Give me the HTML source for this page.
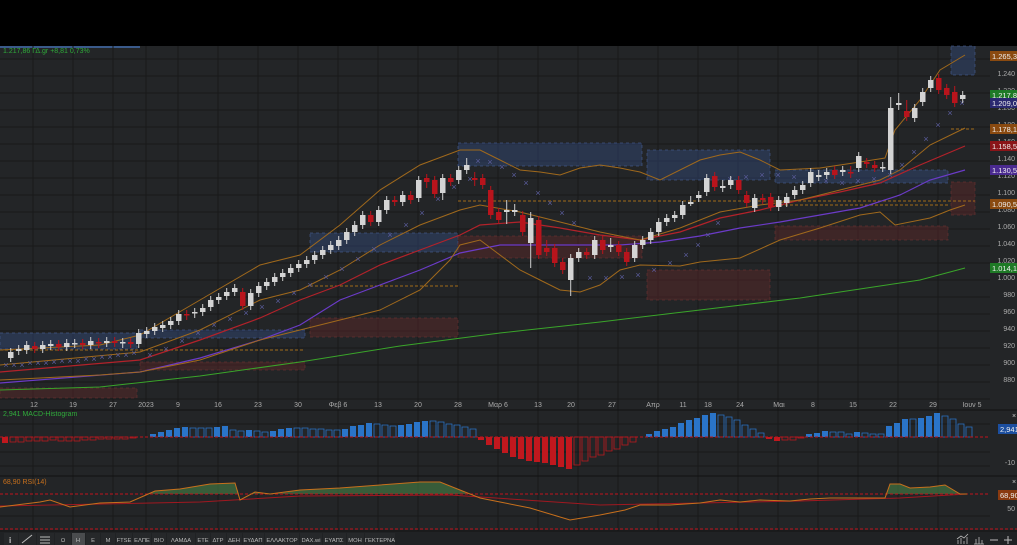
<!DOCTYPE html>
<html><head><meta charset="utf-8">
<style>
html,body{margin:0;padding:0;background:#000;}
body{width:1017px;height:545px;overflow:hidden;position:relative;font-family:"Liberation Sans",sans-serif;}
svg{position:absolute;left:0;top:0;}
</style></head>
<body>
<svg width="1017" height="545" xmlns="http://www.w3.org/2000/svg" font-family="Liberation Sans, sans-serif">
<rect x="0" y="0" width="1017" height="46" fill="#000"/>
<rect x="0" y="46" width="1017" height="499" fill="#232527"/>
<rect x="0" y="46" width="140" height="2" fill="#3a5a8a"/>
<g stroke="#18191a" stroke-width="1">
<path d="M33 46V531M73 46V531M113 46V531M146 46V531M178 46V531M218 46V531M258 46V531M298 46V531M338 46V531M378 46V531M418 46V531M458 46V531M498 46V531M538 46V531M578 46V531M618 46V531M658 46V531M698 46V531M738 46V531M778 46V531M818 46V531M858 46V531M898 46V531M938 46V531"/>
<path d="M0 59H990M0 76H990M0 93H990M0 110H990M0 127H990M0 144H990M0 161H990M0 178H990M0 195H990M0 212H990M0 229H990M0 246H990M0 263H990M0 280H990M0 297H990M0 314H990M0 331H990M0 348H990M0 365H990M0 382H990M0 399H990M0 424H990M0 452H990M0 466H990M0 516H990"/>
</g>
<path d="M0 410H1017M0 476H1017M0 531H1017" stroke="#111"/>
<g stroke-dasharray="3,3">
<g fill="rgba(50,75,125,0.45)" stroke="rgba(70,95,150,0.6)">
<rect x="0" y="333" width="137" height="16"/><rect x="140" y="330" width="165" height="8"/><rect x="310" y="233" width="148" height="19"/><rect x="458" y="143" width="184" height="23"/><rect x="647" y="150" width="123" height="30"/><rect x="775" y="170" width="173" height="13"/><rect x="951" y="46" width="24" height="29"/>
</g>
<g fill="rgba(95,40,40,0.45)" stroke="rgba(110,50,50,0.6)">
<rect x="0" y="388" width="137" height="10"/><rect x="140" y="362" width="165" height="8"/><rect x="310" y="318" width="148" height="19"/><rect x="458" y="236" width="184" height="22"/><rect x="647" y="270" width="123" height="30"/><rect x="775" y="226" width="173" height="14"/><rect x="951" y="182" width="24" height="33"/>
</g>
</g>
<path d="M0 350H305M310 286H458M458 201H975M775 205H948M951 129H975" stroke="#a06a1a" stroke-dasharray="3,2"/>
<g fill="none">
<polyline stroke="#3aa52a" points="0,390 100,387 200,376 300,362 400,346 500,333 600,322 700,310 800,298 880,286 920,280 965,268"/>
<polyline stroke="#6b3bc8" stroke-width="1.2" points="0,383 140,372 200,358 260,340 300,325 340,300 380,285 420,270 460,253 500,245 540,245 620,245 660,242 700,236 740,228 780,222 820,215 860,208 900,195 930,180 965,170"/>
<polyline stroke="#b3222a" stroke-width="1.2" points="0,372 140,360 200,340 260,318 300,300 340,285 380,265 420,250 460,235 480,225 520,222 560,228 600,235 640,240 680,232 720,218 760,210 800,200 840,192 880,183 920,165 965,146"/>
<g stroke="#a0691c">
<polyline points="0,365 140,352 200,330 260,300 300,290 340,270 380,245 420,225 460,210 480,205 520,212 560,222 600,232 640,240 680,228 720,212 760,205 800,200 840,190 880,180 900,170 930,145 965,128"/>
<polyline points="0,350 100,345 140,335 200,300 260,265 300,255 340,225 380,190 420,165 460,150 480,150 500,160 520,170 540,172 560,175 580,168 600,165 620,168 640,172 660,180 700,160 720,155 740,152 760,160 780,170 820,168 860,162 885,158 895,130 920,100 940,70 965,55"/>
<polyline points="0,380 100,375 140,372 200,360 260,340 300,330 340,320 380,310 420,290 450,260 460,245 480,240 500,255 520,270 540,280 560,290 580,292 600,285 620,270 640,265 680,266 700,262 740,258 780,240 820,228 860,215 880,212 895,225 930,218 950,210 965,205"/>
</g>
</g>
<g fill="#5a5c9a" font-size="9" text-anchor="middle">
<text x="6" y="368">×</text><text x="14" y="368">×</text><text x="22" y="368">×</text><text x="30" y="366">×</text><text x="38" y="366">×</text><text x="46" y="366">×</text><text x="54" y="365">×</text><text x="62" y="364">×</text><text x="70" y="364">×</text><text x="78" y="364">×</text><text x="86" y="362">×</text><text x="94" y="362">×</text><text x="102" y="360">×</text><text x="110" y="360">×</text><text x="118" y="358">×</text><text x="126" y="358">×</text><text x="134" y="356">×</text>
<text x="150" y="358">×</text><text x="166" y="352">×</text><text x="182" y="344">×</text><text x="198" y="336">×</text><text x="214" y="328">×</text><text x="230" y="322">×</text><text x="246" y="316">×</text><text x="262" y="310">×</text><text x="278" y="304">×</text><text x="294" y="296">×</text><text x="310" y="288">×</text><text x="326" y="280">×</text><text x="342" y="272">×</text><text x="358" y="262">×</text><text x="374" y="252">×</text><text x="390" y="238">×</text><text x="406" y="228">×</text><text x="422" y="216">×</text><text x="438" y="202">×</text><text x="454" y="190">×</text><text x="470" y="182">×</text>
<text x="478" y="164">×</text><text x="490" y="165">×</text><text x="502" y="170">×</text><text x="514" y="178">×</text><text x="526" y="186">×</text><text x="538" y="196">×</text><text x="550" y="206">×</text><text x="562" y="216">×</text><text x="574" y="226">×</text>
<text x="590" y="281">×</text><text x="606" y="281">×</text><text x="622" y="280">×</text><text x="638" y="278">×</text><text x="654" y="273">×</text><text x="670" y="266">×</text><text x="686" y="258">×</text><text x="698" y="248">×</text><text x="708" y="238">×</text><text x="718" y="226">×</text>
<text x="730" y="182">×</text><text x="746" y="180">×</text><text x="762" y="178">×</text><text x="778" y="178">×</text><text x="794" y="180">×</text><text x="810" y="182">×</text><text x="826" y="184">×</text><text x="842" y="186">×</text><text x="858" y="184">×</text><text x="874" y="182">×</text><text x="890" y="178">×</text><text x="902" y="168">×</text><text x="914" y="155">×</text><text x="926" y="142">×</text><text x="938" y="128">×</text><text x="950" y="116">×</text><text x="962" y="106">×</text>
</g>
<path stroke="#cfcfcf" stroke-width="1" d="M10.7 348V362M18.7 345V355M26.7 341V354M42.7 341V353M50.7 340V350M66.7 339V351M74.7 339V348M90.7 337V349M106.7 337V347M122.7 338V348M138.7 329V348M146.7 327V338M154.7 323V335M162.7 321V332M170.7 317V329M178.7 310V325M194.7 308V318M202.7 304V316M210.7 296V311M218.7 293V304M226.7 288V300M234.7 284V296M250.7 289V310M258.7 282V297M266.7 278V290M274.7 273V286M282.7 269V281M290.7 264V277M298.7 260V272M306.7 256V268M314.7 251V264M322.7 246V259M330.7 241V254M338.7 236V250M346.7 228V244M354.7 221V236M362.7 211V229M378.7 206V226M386.7 196V214M402.7 191V206M418.7 176V202M442.7 174V200M458.7 166V184M466.7 158V174M506.7 200V224M514.7 204V216M530.7 212V268M570.7 254V296M578.7 248V262M594.7 236V259M610.7 238V252M634.7 241V262M642.7 236V249M650.7 228V244M658.7 218V236M666.7 214V226M674.7 211V222M682.7 201V219M690.7 196V206M698.7 191V202M706.7 174V196M722.7 180V192M730.7 176V189M754.7 194V212M778.7 196V211M786.7 193V207M794.7 186V199M802.7 181V194M810.7 168V187M818.7 170V181M826.7 168V179M842.7 166V176M858.7 152V172M882.7 162V172M890.7 97V174M898.7 93V110M914.7 104V122M922.7 88V106M930.7 76V92M962.7 91V103"/>
<path stroke="#b8141c" stroke-width="1" d="M34.7 342V353M58.7 340V351M82.7 339V349M98.7 338V348M114.7 337V347M130.7 338V348M186.7 310V320M242.7 288V310M370.7 211V226M394.7 196V206M410.7 191V204M426.7 174V188M434.7 176V198M450.7 174V186M474.7 172V186M482.7 174V189M490.7 186V219M498.7 208V224M522.7 211V236M538.7 216V259M546.7 240V256M554.7 244V267M562.7 258V274M586.7 248V259M602.7 236V254M618.7 241V256M626.7 248V266M714.7 172V191M738.7 176V194M746.7 191V207M762.7 194V204M770.7 193V211M834.7 166V179M850.7 166V178M866.7 158V168M874.7 161V172M906.7 100V121M938.7 74V94M946.7 84V99M954.7 86V107"/>
<g fill="#d4d4d4">
<rect x="8" y="352" width="5.5" height="6"/><rect x="16" y="349" width="5.5" height="2"/><rect x="24" y="345" width="5.5" height="5"/><rect x="40" y="345" width="5.5" height="4"/><rect x="48" y="344" width="5.5" height="2"/><rect x="64" y="343" width="5.5" height="4"/><rect x="72" y="343" width="5.5" height="1.5"/><rect x="88" y="341" width="5.5" height="4"/><rect x="104" y="341" width="5.5" height="2"/><rect x="120" y="342" width="5.5" height="1.5"/><rect x="136" y="333" width="5.5" height="11"/><rect x="144" y="331" width="5.5" height="3"/><rect x="152" y="327" width="5.5" height="4"/><rect x="160" y="325" width="5.5" height="3"/><rect x="168" y="321" width="5.5" height="4"/><rect x="176" y="314" width="5.5" height="7"/><rect x="192" y="312" width="5.5" height="1.5"/><rect x="200" y="308" width="5.5" height="4"/><rect x="208" y="300" width="5.5" height="7"/><rect x="216" y="297" width="5.5" height="3"/><rect x="224" y="292" width="5.5" height="4"/><rect x="232" y="288" width="5.5" height="4"/><rect x="248" y="293" width="5.5" height="13"/><rect x="256" y="286" width="5.5" height="7"/><rect x="264" y="282" width="5.5" height="4"/><rect x="272" y="277" width="5.5" height="5"/><rect x="280" y="273" width="5.5" height="4"/><rect x="288" y="268" width="5.5" height="5"/><rect x="296" y="264" width="5.5" height="4"/><rect x="304" y="260" width="5.5" height="4"/><rect x="312" y="255" width="5.5" height="5"/><rect x="320" y="250" width="5.5" height="5"/><rect x="328" y="245" width="5.5" height="5"/><rect x="336" y="240" width="5.5" height="6"/><rect x="344" y="232" width="5.5" height="8"/><rect x="352" y="225" width="5.5" height="7"/><rect x="360" y="215" width="5.5" height="10"/><rect x="376" y="210" width="5.5" height="12"/><rect x="384" y="200" width="5.5" height="10"/><rect x="400" y="195" width="5.5" height="7"/><rect x="416" y="180" width="5.5" height="18"/><rect x="440" y="178" width="5.5" height="15"/><rect x="456" y="170" width="5.5" height="10"/><rect x="464" y="165" width="5.5" height="5"/><rect x="504" y="210" width="5.5" height="2"/><rect x="512" y="210" width="5.5" height="2"/><rect x="528" y="218" width="5.5" height="25"/><rect x="568" y="258" width="5.5" height="22"/><rect x="576" y="252" width="5.5" height="6"/><rect x="592" y="240" width="5.5" height="15"/><rect x="608" y="245" width="5.5" height="2"/><rect x="632" y="245" width="5.5" height="13"/><rect x="640" y="240" width="5.5" height="5"/><rect x="648" y="232" width="5.5" height="8"/><rect x="656" y="222" width="5.5" height="10"/><rect x="664" y="218" width="5.5" height="4"/><rect x="672" y="215" width="5.5" height="3"/><rect x="680" y="205" width="5.5" height="10"/><rect x="688" y="202" width="5.5" height="2"/><rect x="696" y="195" width="5.5" height="3"/><rect x="704" y="178" width="5.5" height="14"/><rect x="720" y="186" width="5.5" height="2"/><rect x="728" y="180" width="5.5" height="5"/><rect x="752" y="198" width="5.5" height="10"/><rect x="776" y="200" width="5.5" height="7"/><rect x="784" y="197" width="5.5" height="6"/><rect x="792" y="190" width="5.5" height="5"/><rect x="800" y="185" width="5.5" height="5"/><rect x="808" y="172" width="5.5" height="11"/><rect x="816" y="175" width="5.5" height="2"/><rect x="824" y="172" width="5.5" height="3"/><rect x="840" y="170" width="5.5" height="2"/><rect x="856" y="156" width="5.5" height="12"/><rect x="880" y="167" width="5.5" height="1.5"/><rect x="888" y="108" width="5.5" height="62"/><rect x="896" y="103" width="5.5" height="2"/><rect x="912" y="108" width="5.5" height="10"/><rect x="920" y="92" width="5.5" height="10"/><rect x="928" y="80" width="5.5" height="8"/><rect x="960" y="95" width="5.5" height="4"/>
</g>
<g fill="#b8141c">
<rect x="32" y="346" width="5.5" height="3"/><rect x="56" y="344" width="5.5" height="3"/><rect x="80" y="343" width="5.5" height="2"/><rect x="96" y="342" width="5.5" height="1.5"/><rect x="112" y="341" width="5.5" height="2"/><rect x="128" y="342" width="5.5" height="2"/><rect x="184" y="314" width="5.5" height="1.5"/><rect x="240" y="292" width="5.5" height="14"/><rect x="368" y="215" width="5.5" height="7"/><rect x="392" y="200" width="5.5" height="2"/><rect x="408" y="195" width="5.5" height="5"/><rect x="424" y="178" width="5.5" height="4"/><rect x="432" y="180" width="5.5" height="14"/><rect x="448" y="178" width="5.5" height="4"/><rect x="472" y="178" width="5.5" height="2"/><rect x="480" y="178" width="5.5" height="7"/><rect x="488" y="190" width="5.5" height="25"/><rect x="496" y="212" width="5.5" height="8"/><rect x="520" y="215" width="5.5" height="17"/><rect x="536" y="220" width="5.5" height="35"/><rect x="544" y="248" width="5.5" height="4"/><rect x="552" y="248" width="5.5" height="15"/><rect x="560" y="262" width="5.5" height="8"/><rect x="584" y="252" width="5.5" height="3"/><rect x="600" y="240" width="5.5" height="10"/><rect x="616" y="245" width="5.5" height="7"/><rect x="624" y="252" width="5.5" height="10"/><rect x="712" y="176" width="5.5" height="11"/><rect x="736" y="180" width="5.5" height="10"/><rect x="744" y="195" width="5.5" height="8"/><rect x="760" y="198" width="5.5" height="2"/><rect x="768" y="197" width="5.5" height="10"/><rect x="832" y="170" width="5.5" height="5"/><rect x="848" y="172" width="5.5" height="1.5"/><rect x="864" y="162" width="5.5" height="2"/><rect x="872" y="165" width="5.5" height="3"/><rect x="904" y="111" width="5.5" height="6"/><rect x="936" y="78" width="5.5" height="12"/><rect x="944" y="88" width="5.5" height="7"/><rect x="952" y="92" width="5.5" height="11"/>
</g>
<g font-size="7" fill="#aaa" text-anchor="end">
<text x="1015" y="76">1.240</text><text x="1015" y="93">1.220</text><text x="1015" y="110">1.200</text><text x="1015" y="127">1.180</text><text x="1015" y="144">1.160</text><text x="1015" y="161">1.140</text><text x="1015" y="178">1.120</text><text x="1015" y="195">1.100</text><text x="1015" y="212">1.080</text><text x="1015" y="229">1.060</text><text x="1015" y="246">1.040</text><text x="1015" y="263">1.020</text><text x="1015" y="280">1.000</text><text x="1015" y="297">980</text><text x="1015" y="314">960</text><text x="1015" y="331">940</text><text x="1015" y="348">920</text><text x="1015" y="365">900</text><text x="1015" y="382">880</text>
</g>
<g font-size="7.5" fill="#eee">
<rect x="990" y="51" width="27" height="10" fill="#8a4a10"/><text x="992" y="59">1.265,3</text>
<rect x="990" y="90" width="27" height="10" fill="#1e7a26"/><text x="992" y="98">1.217,86</text>
<rect x="990" y="98" width="27" height="10" fill="#2a2870"/><text x="992" y="106">1.209,05</text>
<rect x="990" y="124" width="27" height="10" fill="#8a4a10"/><text x="992" y="132">1.178,18</text>
<rect x="990" y="141" width="27" height="10" fill="#8a1418"/><text x="992" y="149">1.158,51</text>
<rect x="990" y="165" width="27" height="10" fill="#4a2a90"/><text x="992" y="173">1.130,58</text>
<rect x="990" y="199" width="27" height="10" fill="#8a4a10"/><text x="992" y="207">1.090,5</text>
<rect x="990" y="263" width="27" height="10" fill="#1e7a26"/><text x="992" y="271">1.014,10</text>
</g>
<text x="3" y="53" font-size="7" fill="#2faa3a">1.217,86 ΓΔ.gr +8,81 0,73%</text>
<g font-size="7" fill="#aaa" text-anchor="middle">
<text x="34" y="407">12</text><text x="73" y="407">19</text><text x="113" y="407">27</text><text x="146" y="407">2023</text><text x="178" y="407">9</text><text x="218" y="407">16</text><text x="258" y="407">23</text><text x="298" y="407">30</text><text x="338" y="407">Φεβ 6</text><text x="378" y="407">13</text><text x="418" y="407">20</text><text x="458" y="407">28</text><text x="498" y="407">Μαρ 6</text><text x="538" y="407">13</text><text x="571" y="407">20</text><text x="612" y="407">27</text><text x="653" y="407">Απρ</text><text x="683" y="407">11</text><text x="708" y="407">18</text><text x="740" y="407">24</text><text x="779" y="407">Μαι</text><text x="813" y="407">8</text><text x="853" y="407">15</text><text x="893" y="407">22</text><text x="933" y="407">29</text><text x="972" y="407">Ιουν 5</text>
</g>
<text x="3" y="416" font-size="7" fill="#2faa3a">2,941 MACD-Histogram</text>
<g fill="none" stroke="#c0181e" stroke-width="0.8">
<path d="M10 437h6v5h-6zM18 437h6v5h-6zM26 437h6v4h-6zM34 437h6v4h-6zM42 437h6v4h-6zM50 437h6v3h-6zM58 437h6v4h-6zM66 437h6v4h-6zM74 437h6v4h-6zM82 437h6v3h-6zM90 437h6v3h-6zM98 437h6v2h-6zM106 437h6v2h-6zM114 437h6v2h-6zM122 437h6v2h-6zM130 437h6v1h-6z"/>
<path d="M574 437h6v28h-6zM582 437h6v24h-6zM590 437h6v20h-6zM598 437h6v18h-6zM606 437h6v14h-6zM614 437h6v12h-6zM622 437h6v8h-6zM630 437h6v5h-6zM782 437h6v3h-6zM790 437h6v3h-6zM798 437h6v1h-6z"/>
</g>
<path fill="#c0181e" d="M2 437h6v6h-6zM478 437h6v3h-6zM486 437h6v8h-6zM494 437h6v12h-6zM502 437h6v16h-6zM510 437h6v20h-6zM518 437h6v22h-6zM526 437h6v24h-6zM534 437h6v25h-6zM542 437h6v26h-6zM550 437h6v28h-6zM558 437h6v30h-6zM566 437h6v32h-6zM766 437h6v2h-6zM774 437h6v4h-6z"/>
<path fill="#2a74c8" d="M150 437h6v-3h-6zM158 437h6v-5h-6zM166 437h6v-7h-6zM174 437h6v-9h-6zM182 437h6v-10h-6zM214 437h6v-10h-6zM222 437h6v-11h-6zM246 437h6v-7h-6zM270 437h6v-6h-6zM278 437h6v-8h-6zM286 437h6v-9h-6zM342 437h6v-8h-6zM350 437h6v-11h-6zM358 437h6v-12h-6zM366 437h6v-14h-6zM398 437h6v-12h-6zM406 437h6v-13h-6zM414 437h6v-15h-6zM422 437h6v-16h-6zM646 437h6v-3h-6zM654 437h6v-6h-6zM662 437h6v-8h-6zM670 437h6v-10h-6zM678 437h6v-14h-6zM686 437h6v-17h-6zM694 437h6v-19h-6zM702 437h6v-22h-6zM710 437h6v-24h-6zM806 437h6v-3h-6zM814 437h6v-4h-6zM822 437h6v-6h-6zM854 437h6v-5h-6zM886 437h6v-11h-6zM894 437h6v-14h-6zM902 437h6v-18h-6zM918 437h6v-19h-6zM926 437h6v-21h-6zM934 437h6v-24h-6z"/>
<g fill="none" stroke="#2a74c8" stroke-width="0.8">
<path d="M190 437h6v-9h-6zM198 437h6v-9h-6zM206 437h6v-9h-6zM230 437h6v-7h-6zM238 437h6v-6h-6zM254 437h6v-6h-6zM262 437h6v-5h-6zM294 437h6v-9h-6zM302 437h6v-9h-6zM310 437h6v-8h-6zM318 437h6v-8h-6zM326 437h6v-7h-6zM334 437h6v-7h-6zM374 437h6v-13h-6zM382 437h6v-12h-6zM390 437h6v-11h-6zM430 437h6v-16h-6zM438 437h6v-15h-6zM446 437h6v-13h-6zM454 437h6v-12h-6zM462 437h6v-10h-6zM470 437h6v-8h-6zM718 437h6v-22h-6zM726 437h6v-20h-6zM734 437h6v-17h-6zM742 437h6v-12h-6zM750 437h6v-8h-6zM758 437h6v-4h-6zM830 437h6v-5h-6zM838 437h6v-5h-6zM846 437h6v-3h-6zM862 437h6v-4h-6zM870 437h6v-3h-6zM878 437h6v-3h-6zM910 437h6v-18h-6zM942 437h6v-21h-6zM950 437h6v-18h-6zM958 437h6v-13h-6zM966 437h6v-10h-6z"/>
</g>
<line x1="0" y1="437" x2="990" y2="437" stroke="#c0141c" stroke-dasharray="3,2"/>
<rect x="998" y="424" width="19" height="10" fill="#1c4fa0"/><text x="1000" y="432" font-size="7.5" fill="#eee">2,941</text>
<text x="1012" y="418" font-size="7" fill="#ccc">×</text>
<text x="1015" y="465" font-size="7" fill="#aaa" text-anchor="end">-10</text>
<text x="3" y="484" font-size="7" fill="#c8701c">68,90 RSI(14)</text>
<g fill="rgba(70,130,70,0.6)">
<polygon points="148,494 155,491 180,489 210,484 235,483 239,494"/>
<polygon points="252,494 255,492 262,494"/>
<polygon points="276,494 300,490 340,488 380,485 420,482 440,482 460,490 468,494"/>
<polygon points="887,494 890,484 900,484 910,488 930,487 945,485 960,494"/>
</g>
<path d="M0 494H990M0 529H1017" stroke="#c0141c" stroke-dasharray="3,2"/>
<polyline fill="none" stroke="#a01820" points="0,506 200,502 300,496 450,495 600,505 700,503 800,501 900,498 967,494"/>
<polyline fill="none" stroke="#c8701c" points="0,507 40,502 50,500 70,507 100,503 130,502 146,495 155,491 180,489 210,484 235,483 240,500 255,492 270,494 300,490 340,488 380,485 420,482 440,482 460,490 480,498 500,502 530,508 570,520 600,515 625,510 640,505 670,505 700,503 720,500 740,502 760,500 790,501 810,499 830,498 860,498 885,498 890,484 900,484 910,488 930,487 945,485 960,494 967,494"/>
<rect x="998" y="490" width="19" height="10" fill="#8a3a10"/><text x="1000" y="498" font-size="7.5" fill="#eee">68,90</text>
<text x="1012" y="484" font-size="7" fill="#ccc">×</text>
<text x="1015" y="511" font-size="7" fill="#aaa" text-anchor="end">50</text>
<rect x="0" y="532" width="1017" height="13" fill="#202224"/>
<g fill="#26282a">
<rect x="4" y="533" width="14" height="12"/><rect x="19" y="533" width="17" height="12"/><rect x="37" y="533" width="17" height="12"/><rect x="55" y="533" width="16" height="12"/><rect x="86" y="533" width="14" height="12"/><rect x="101" y="533" width="14" height="12"/><rect x="116" y="533" width="16" height="12"/><rect x="133" y="533" width="18" height="12"/><rect x="152" y="533" width="14" height="12"/><rect x="167" y="533" width="28" height="12"/><rect x="196" y="533" width="14" height="12"/><rect x="211" y="533" width="15" height="12"/><rect x="227" y="533" width="15" height="12"/><rect x="243" y="533" width="21" height="12"/><rect x="265" y="533" width="34" height="12"/><rect x="300" y="533" width="22" height="12"/><rect x="323" y="533" width="23" height="12"/><rect x="347" y="533" width="17" height="12"/><rect x="365" y="533" width="30" height="12"/>
</g>
<rect x="72" y="533" width="13" height="12" fill="#4a4c4e"/>
<g font-size="5.8" fill="#bbb" text-anchor="middle">
<text x="63" y="542">Ω</text><text x="78" y="542">Η</text><text x="93" y="542">Ε</text><text x="108" y="542">Μ</text><text x="124" y="542">FTSE</text><text x="142" y="542">ΕΛΠΕ</text><text x="159" y="542">ΒΙΟ</text><text x="181" y="542">ΛΑΜΔΑ</text><text x="203" y="542">ΕΤΕ</text><text x="218" y="542">ΔΤΡ</text><text x="234" y="542">ΔΕΗ</text><text x="253" y="542">ΕΥΔΑΠ</text><text x="282" y="542">ΕΛΛΑΚΤΟΡ</text><text x="311" y="542">DAX.wi</text><text x="334" y="542">ΕΥΑΠΣ</text><text x="355" y="542">ΜΟΗ</text><text x="380" y="542">ΓΕΚΤΕΡΝΑ</text>
</g>
<text x="9" y="543" font-size="8" fill="#ccc" font-weight="bold">i</text>
<line x1="22" y1="543" x2="32" y2="535" stroke="#bbb"/>
<path d="M40 537h10M40 540h10M40 543h10" stroke="#bbb"/>
<path d="M958 544v-4M961 544v-6M964 544v-3M967 544v-7M957 539l4-3 3 2 4-4" stroke="#bbb" fill="none" stroke-width="0.8"/>
<path d="M974 544h10M976 544v-5M979 544v-7M982 544v-4" stroke="#bbb" stroke-width="0.8"/>
<line x1="990" y1="540" x2="998" y2="540" stroke="#bbb"/>
<path d="M1004 540h8M1008 536v8" stroke="#bbb"/>
</svg>
</body></html>
